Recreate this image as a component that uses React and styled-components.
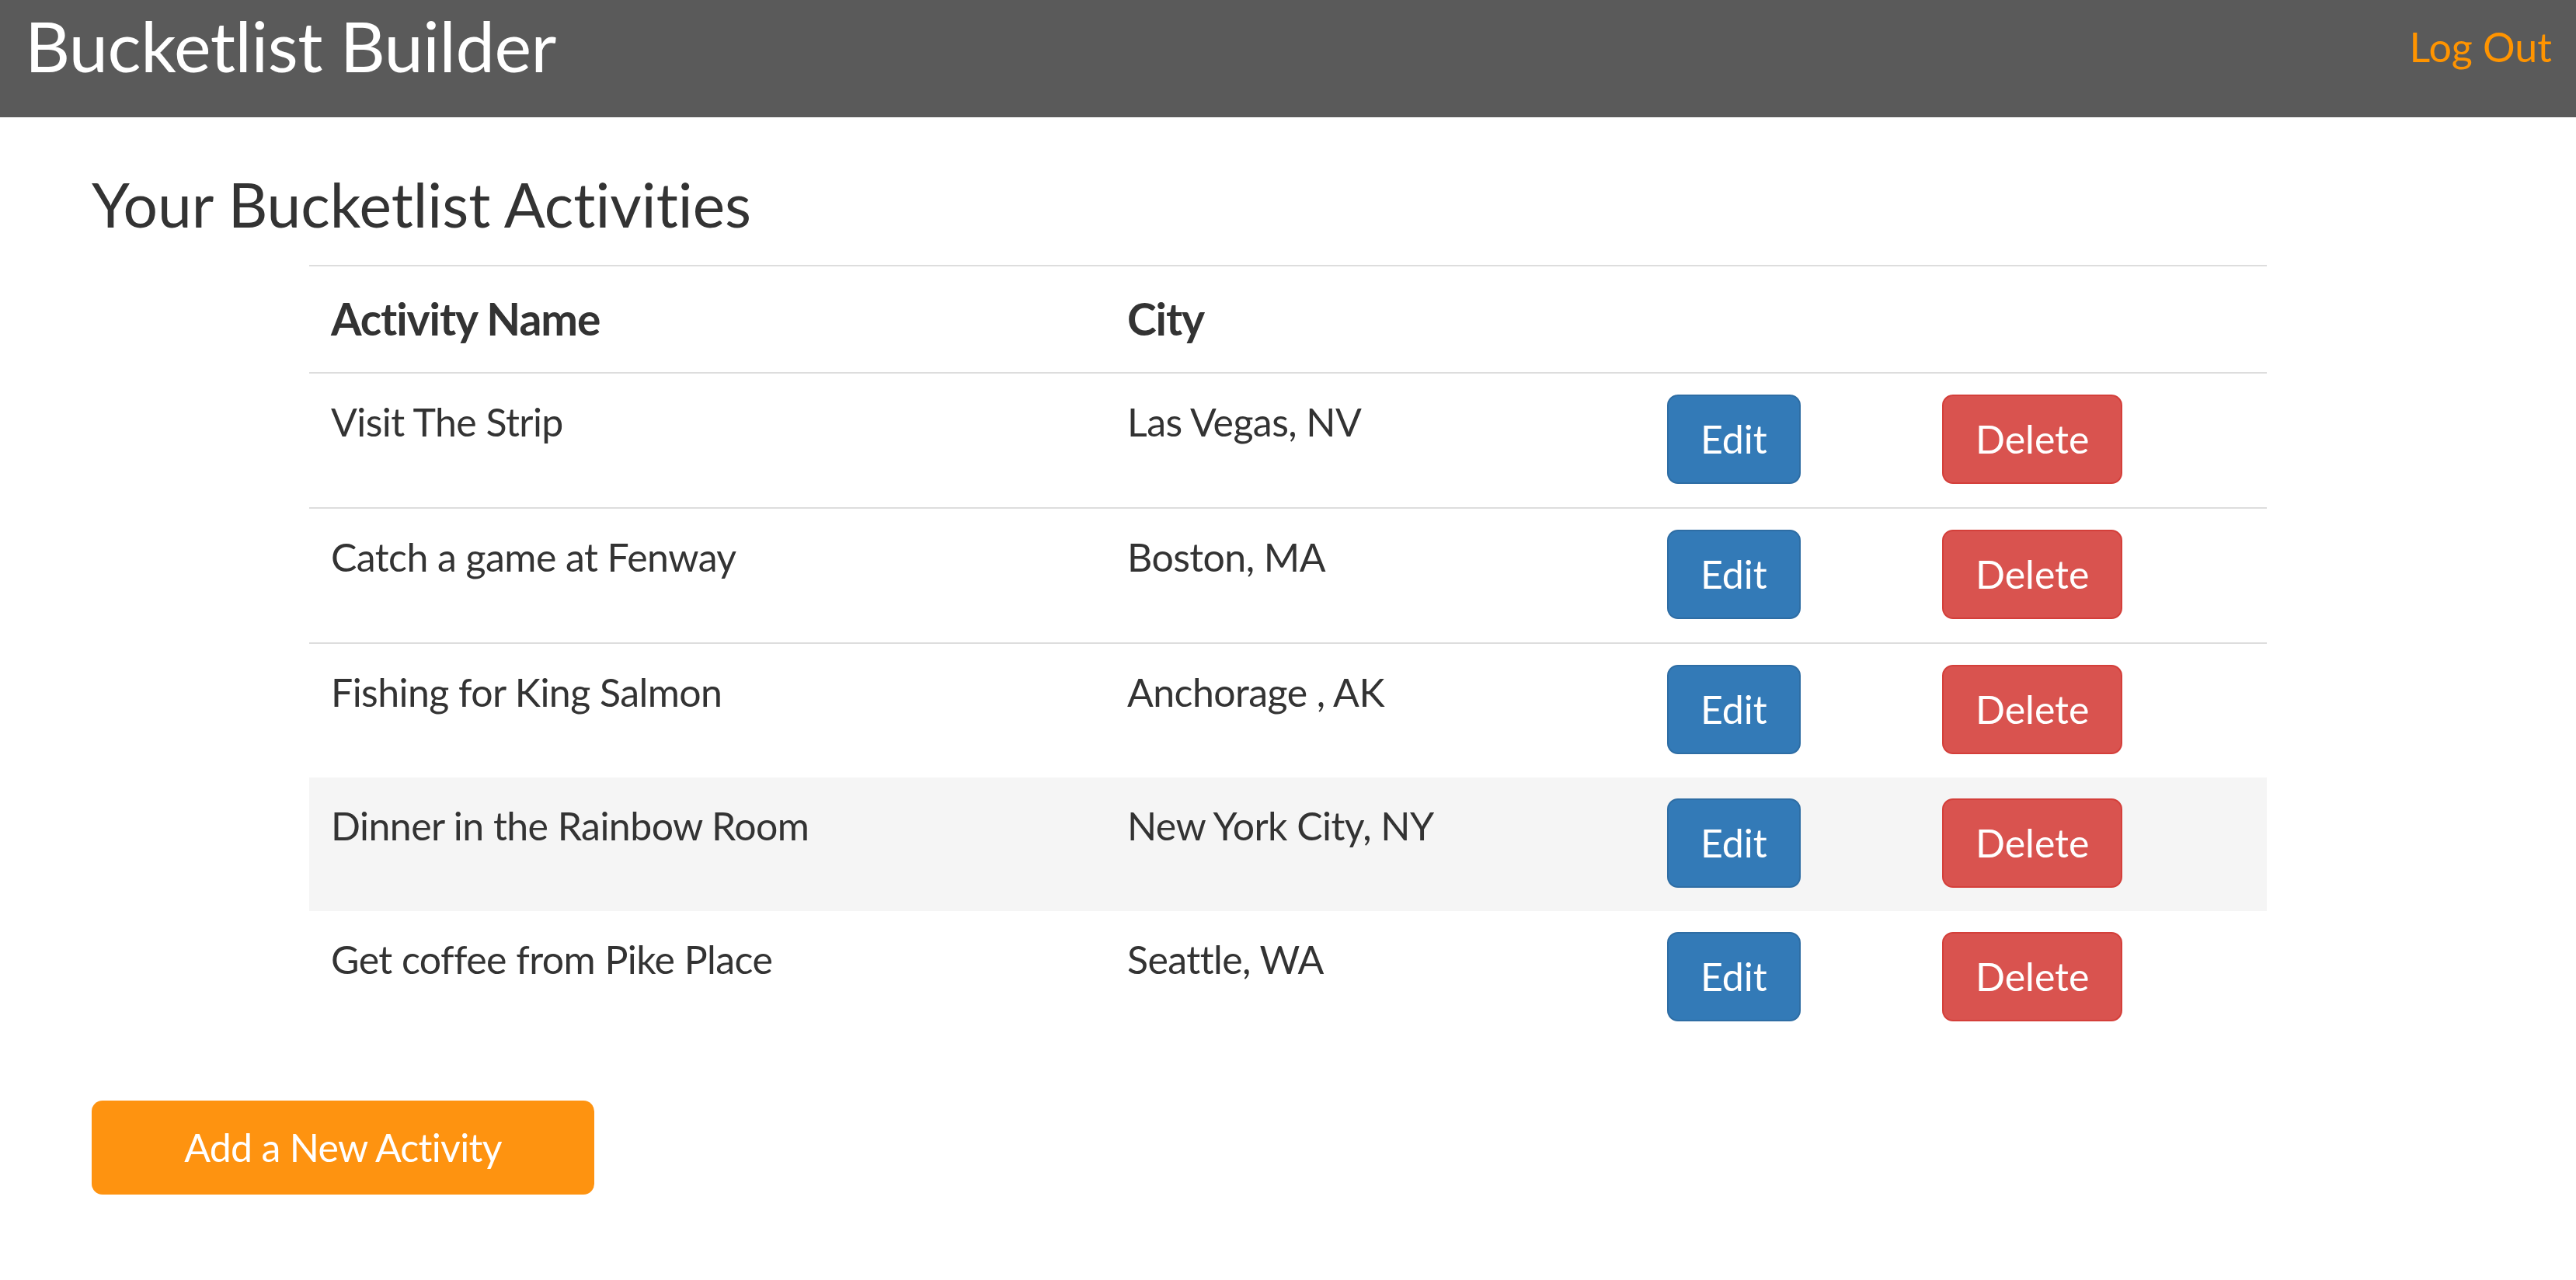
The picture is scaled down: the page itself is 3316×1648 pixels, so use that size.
import React from 'react';
import styled, { createGlobalStyle } from 'styled-components';

const GlobalStyle = createGlobalStyle`
  html, body {
    margin: 0;
    padding: 0;
    background: #ffffff;
  }
  body {
    font-family: Lato, "Open Sans", "Liberation Sans", sans-serif;
    font-variant-ligatures: no-common-ligatures;
    color: #333333;
  }
  * {
    box-sizing: border-box;
  }
`;

const TopBar = styled.header`
  display: flex;
  justify-content: space-between;
  align-items: flex-start;
  height: 151px;
  background: #5a5a5a;
  padding: 0 31px 0 32px;
`;

const Brand = styled.h1`
  margin: 9px 0 0;
  font-size: 90px;
  line-height: 99px;
  font-weight: 400;
  letter-spacing: -0.4px;
  color: #ffffff;
`;

const LogOut = styled.a`
  margin-top: 29px;
  font-size: 52px;
  line-height: 62px;
  color: #ff9400;
  text-decoration: none;
  cursor: pointer;
`;

const Main = styled.main`
  padding: 69px 118px 80px;
`;

const PageTitle = styled.h2`
  margin: 0 0 35px;
  font-size: 78.5px;
  line-height: 86px;
  font-weight: 400;
  color: #333333;
`;

const Table = styled.table`
  width: 2520px;
  margin: 0 auto;
  border-collapse: collapse;
  table-layout: fixed;
`;

const Col = styled.col`
  width: ${(p) => p.$w}px;
`;

const HeadCell = styled.th`
  text-align: left;
  vertical-align: bottom;
  font-size: 57px;
  line-height: 83px;
  font-weight: 700;
  letter-spacing: -1.1px;
  padding: 26px 28px 27px;
  border-top: 2px solid #dddddd;
  border-bottom: 2px solid #dddddd;
`;

const Row = styled.tr`
  background: ${(p) => (p.$shade ? '#f5f5f5' : 'transparent')};
  & + & > td {
    border-top: 2px solid #dddddd;
  }
`;

const Cell = styled.td`
  vertical-align: top;
  font-size: 50px;
  line-height: 71px;
  letter-spacing: -0.55px;
  padding: 27px 28px 30px;
`;

const Button = styled.button`
  display: inline-block;
  vertical-align: top;
  font-family: inherit;
  font-size: 50px;
  line-height: 67px;
  padding: 22px 41px;
  border-radius: 14px;
  border: 2px solid ${(p) => (p.$variant === 'danger' ? '#d43f3a' : '#2e6da4')};
  background: ${(p) => (p.$variant === 'danger' ? '#d9534f' : '#337ab7')};
  color: #ffffff;
  cursor: pointer;
`;

const AddButton = styled.button`
  display: block;
  width: 647px;
  height: 121px;
  margin-top: 72px;
  font-family: inherit;
  font-size: 50px;
  line-height: 67px;
  letter-spacing: -0.7px;
  border: none;
  border-radius: 14px;
  background: #fe9310;
  color: #ffffff;
  cursor: pointer;
`;

const activities = [
  { name: 'Visit The Strip', city: 'Las Vegas, NV' },
  { name: 'Catch a game at Fenway', city: 'Boston, MA' },
  { name: 'Fishing for King Salmon', city: 'Anchorage , AK' },
  { name: 'Dinner in the Rainbow Room', city: 'New York City, NY', shade: true },
  { name: 'Get coffee from Pike Place', city: 'Seattle, WA' },
];

export default function App() {
  return (
    <>
      <GlobalStyle />
      <TopBar>
        <Brand>Bucketlist Builder</Brand>
        <LogOut>Log Out</LogOut>
      </TopBar>
      <Main>
        <PageTitle>Your Bucketlist Activities</PageTitle>
        <Table>
          <colgroup>
            <Col $w={1025} />
            <Col $w={695} />
            <Col $w={354} />
            <Col $w={446} />
          </colgroup>
          <thead>
            <tr>
              <HeadCell>Activity Name</HeadCell>
              <HeadCell>City</HeadCell>
              <HeadCell />
              <HeadCell />
            </tr>
          </thead>
          <tbody>
            {activities.map((a) => (
              <Row key={a.name} $shade={a.shade}>
                <Cell>{a.name}</Cell>
                <Cell>{a.city}</Cell>
                <Cell>
                  <Button>Edit</Button>
                </Cell>
                <Cell>
                  <Button $variant="danger">Delete</Button>
                </Cell>
              </Row>
            ))}
          </tbody>
        </Table>
        <AddButton>Add a New Activity</AddButton>
      </Main>
    </>
  );
}
